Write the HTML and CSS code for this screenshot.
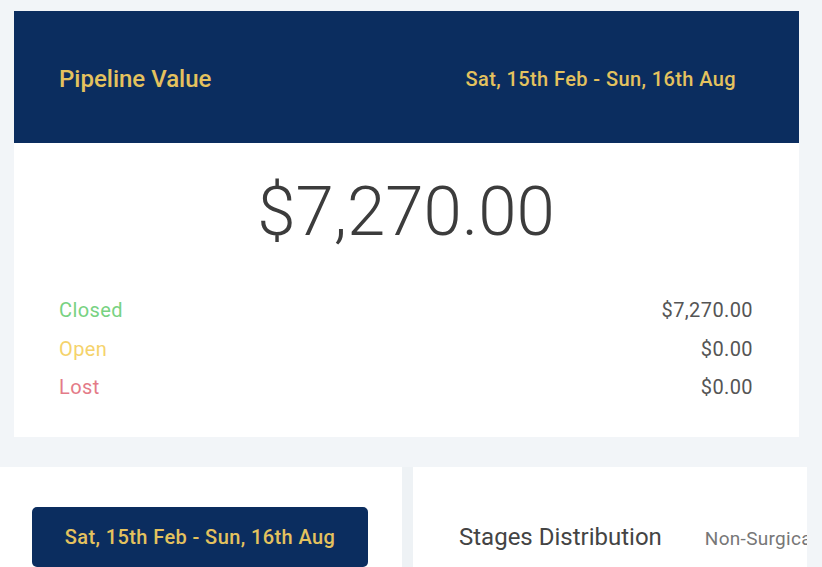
FILE: index.html
```html
<!DOCTYPE html>
<html>
<head>
<meta charset="utf-8">
<link rel="stylesheet" href="styles.css">
</head>
<body>
<div class="page">
  <section class="card">
    <header class="card-head">
      <span class="head-title">Pipeline Value</span>
      <span class="head-date">Sat, 15th Feb - Sun, 16th Aug</span>
    </header>
    <div class="card-body">
      <div class="total">$7,270.00</div>
      <ul class="stats">
        <li class="stat"><span class="label closed">Closed</span><span class="value">$7,270.00</span></li>
        <li class="stat"><span class="label open">Open</span><span class="value">$0.00</span></li>
        <li class="stat"><span class="label lost">Lost</span><span class="value">$0.00</span></li>
      </ul>
    </div>
  </section>
  <div class="row">
    <div class="panel panel-left">
      <button class="date-btn">Sat, 15th Feb - Sun, 16th Aug</button>
    </div>
    <div class="divider"></div>
    <div class="panel panel-right">
      <span class="stages-title">Stages Distribution</span>
      <span class="stages-filter">Non-Surgical</span>
    </div>
  </div>
</div>
</body>
</html>
```

FILE: styles.css
```css
html, body {
  margin: 0;
  padding: 0;
  height: 100%;
  overflow: hidden;
}
body {
  background: #f2f5f8;
  font-family: Roboto, "Liberation Sans", sans-serif;
}
.page {
  padding-top: 11px;
}
.card {
  margin-left: 14px;
  width: 785px;
  background: #fff;
}
.card-head {
  height: 132px;
  background: #0b2d5f;
  display: flex;
  align-items: center;
  justify-content: space-between;
  padding: 4px 63px 0 45px;
  box-sizing: border-box;
  color: #e4c25e;
}
.head-title {
  font-size: 24px;
  font-weight: 500;
}
.head-date {
  font-size: 20px;
  font-weight: 500;
  letter-spacing: 0.4px;
}
.card-body {
  height: 294px;
  box-sizing: border-box;
  padding: 29px 46px 0 45px;
}
.total {
  text-align: center;
  font-size: 69px;
  font-weight: 300;
  color: #3c3c3c;
  line-height: 80px;
}
.stats {
  list-style: none;
  margin: 39px 0 0;
  padding: 0;
}
.stat {
  display: flex;
  justify-content: space-between;
  align-items: center;
  height: 38.5px;
  font-size: 20px;
  letter-spacing: 0.4px;
}
.label.closed { color: #78d282; }
.label.open { color: #f5d36c; }
.label.lost { color: #e47b88; }
.value { color: #555; }
.row {
  display: flex;
  margin-top: 30px;
  height: 120px;
}
.panel {
  background: #fff;
  box-sizing: border-box;
}
.panel-left {
  width: 402px;
  padding: 40px 0 0 32px;
}
.divider {
  width: 11px;
  background: #eef2f5;
}
.panel-right {
  width: 394px;
  padding: 56px 0 0 46px;
  display: flex;
  align-items: baseline;
  gap: 43px;
  overflow: hidden;
  white-space: nowrap;
}
.date-btn {
  width: 336px;
  height: 60px;
  border: none;
  border-radius: 5px;
  background: #0b2d5f;
  color: #e4c25e;
  font-family: Roboto, "Liberation Sans", sans-serif;
  font-size: 20px;
  font-weight: 500;
  letter-spacing: 0.4px;
  padding: 0;
}
.stages-title {
  font-size: 24px;
  color: #444;
}
.stages-filter {
  font-size: 19px;
  color: #777;
  letter-spacing: 0.3px;
}
```
